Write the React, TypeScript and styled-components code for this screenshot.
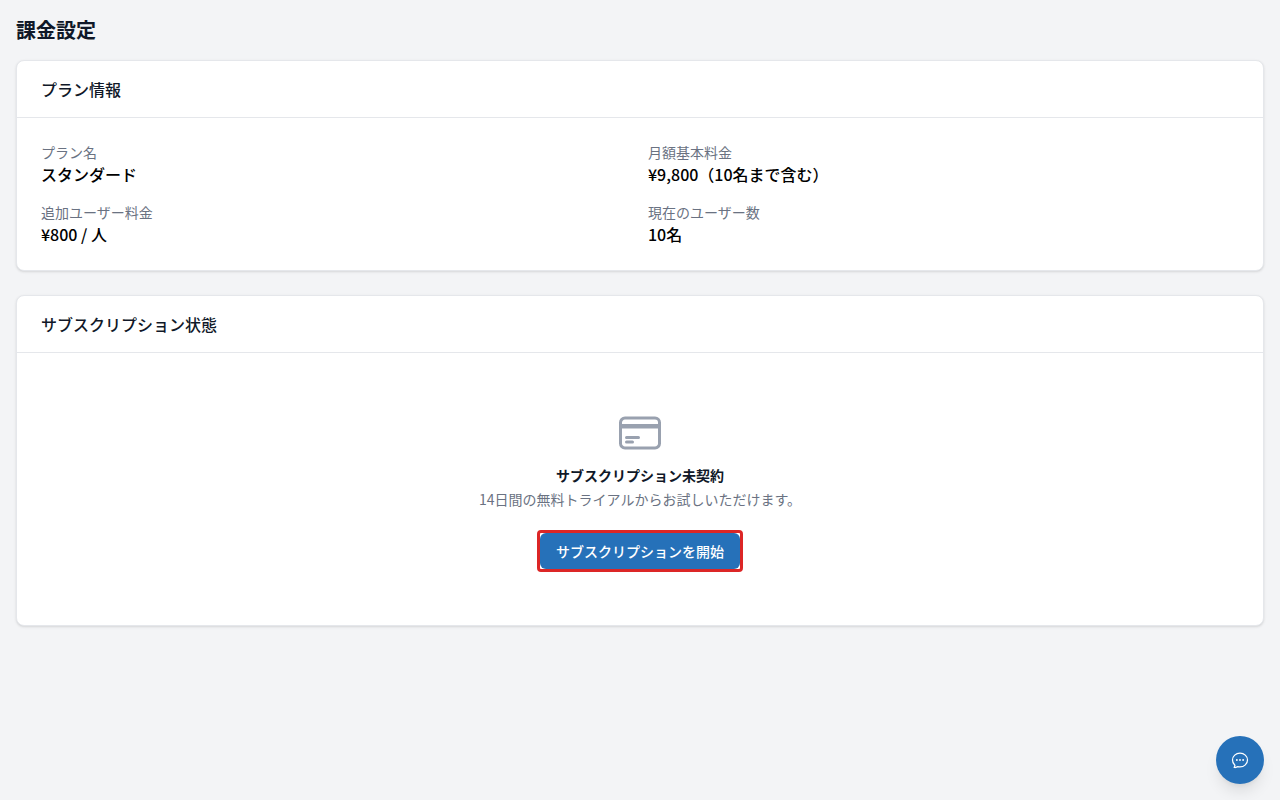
import React from 'react';
import styled, { createGlobalStyle } from 'styled-components';

const GlobalStyle = createGlobalStyle`
  *, *::before, *::after { box-sizing: border-box; }
  body {
    margin: 0;
    background: #f3f4f6;
    color: #000;
    font-family: "Noto Sans CJK JP", sans-serif;
    font-size: 16px;
    line-height: 24px;
  }
  h1, h2, h3, p, dl, dt, dd { margin: 0; }
`;

const Page = styled.main`
  display: flex;
  flex-direction: column;
  min-height: 100vh;
  padding: 16px;
`;

const PageTitle = styled.h1`
  margin-bottom: 16px;
  color: #101828;
  font-size: 20px;
  font-weight: 700;
  line-height: 28px;
`;

const Sections = styled.div`
  display: flex;
  flex-direction: column;
  gap: 24px;
`;

const Card = styled.section`
  background: #fff;
  border: 1px solid #e5e7eb;
  border-radius: 8px;
  box-shadow: 0 1px 3px rgba(0, 0, 0, 0.1), 0 1px 2px -1px rgba(0, 0, 0, 0.1);
`;

const CardHeader = styled.header`
  padding: 16px 24px;
  border-bottom: 1px solid #e5e7eb;
`;

const CardTitle = styled.h2`
  color: #101828;
  font-size: 16px;
  font-weight: 500;
  line-height: 24px;
`;

const CardBody = styled.div`
  padding: 24px;
`;

const PlanGrid = styled.dl`
  display: grid;
  grid-template-columns: repeat(2, minmax(0, 1fr));
  gap: 16px;
`;

const PlanLabel = styled.dt`
  color: #6a7282;
  font-size: 14px;
  line-height: 20px;
`;

const PlanValue = styled.dd`
  font-weight: 500;
`;

const EmptyState = styled.div`
  display: flex;
  flex-direction: column;
  align-items: center;
  padding: 32px 0;
  font-size: 14px;
  line-height: 20px;
  text-align: center;
`;

const CardIcon = styled.svg`
  width: 48px;
  height: 48px;
  color: #99a1af;
`;

const EmptyTitle = styled.h3`
  margin-top: 8px;
  color: #101828;
  font-size: 14px;
  font-weight: 700;
`;

const EmptyText = styled.p`
  margin-top: 4px;
  color: #6a7282;
`;

const PrimaryButton = styled.button`
  position: relative;
  margin-top: 24px;
  padding: 8px 16px;
  border: 0;
  border-radius: 6px;
  background: #2671b9;
  color: #fff;
  font-family: inherit;
  font-size: 14px;
  font-weight: 500;
  line-height: 20px;
  cursor: pointer;

  &::after {
    content: "";
    position: absolute;
    inset: -3px;
    border: 3px solid #dc2626;
    border-radius: 4px;
  }
`;

const ChatButton = styled.button`
  position: fixed;
  right: 16px;
  bottom: 16px;
  display: flex;
  align-items: center;
  justify-content: center;
  width: 48px;
  height: 48px;
  padding: 0;
  border: 0;
  border-radius: 50%;
  background: #2671b9;
  color: #fff;
  box-shadow: 0 10px 15px -3px rgba(0, 0, 0, 0.1), 0 4px 6px -4px rgba(0, 0, 0, 0.1);
  cursor: pointer;
`;

const plan = [
  { label: 'プラン名', value: 'スタンダード' },
  { label: '月額基本料金', value: '¥9,800（10名まで含む）' },
  { label: '追加ユーザー料金', value: '¥800 / 人' },
  { label: '現在のユーザー数', value: '10名' },
];

export default function App() {
  return (
    <>
      <GlobalStyle />
      <Page lang="ja">
        <PageTitle>課金設定</PageTitle>
        <Sections>
          <Card>
            <CardHeader>
              <CardTitle>プラン情報</CardTitle>
            </CardHeader>
            <CardBody>
              <PlanGrid>
                {plan.map((item) => (
                  <div key={item.label}>
                    <PlanLabel>{item.label}</PlanLabel>
                    <PlanValue>{item.value}</PlanValue>
                  </div>
                ))}
              </PlanGrid>
            </CardBody>
          </Card>
          <Card>
            <CardHeader>
              <CardTitle>サブスクリプション状態</CardTitle>
            </CardHeader>
            <CardBody>
              <EmptyState>
                <CardIcon
                  viewBox="0 0 24 24"
                  fill="none"
                  stroke="currentColor"
                  strokeWidth="1.5"
                  strokeLinecap="round"
                  strokeLinejoin="round"
                  aria-hidden="true"
                >
                  <path d="M2.25 8.25h19.5M2.25 9h19.5m-16.5 5.25h6m-6 2.25h3m-3.75 3h15a2.25 2.25 0 0 0 2.25-2.25V6.75A2.25 2.25 0 0 0 19.5 4.5h-15a2.25 2.25 0 0 0-2.25 2.25v10.5A2.25 2.25 0 0 0 4.5 19.5Z" />
                </CardIcon>
                <EmptyTitle>サブスクリプション未契約</EmptyTitle>
                <EmptyText>14日間の無料トライアルからお試しいただけます。</EmptyText>
                <PrimaryButton type="button">サブスクリプションを開始</PrimaryButton>
              </EmptyState>
            </CardBody>
          </Card>
        </Sections>
      </Page>
      <ChatButton type="button" aria-label="チャット">
        <svg
          width="20"
          height="20"
          viewBox="0 0 24 24"
          fill="none"
          stroke="currentColor"
          strokeWidth="1.5"
          strokeLinecap="round"
          strokeLinejoin="round"
          aria-hidden="true"
        >
          <path d="M8.625 12a.375.375 0 1 1-.75 0 .375.375 0 0 1 .75 0Zm0 0H8.25m4.125 0a.375.375 0 1 1-.75 0 .375.375 0 0 1 .75 0Zm0 0H12m4.125 0a.375.375 0 1 1-.75 0 .375.375 0 0 1 .75 0Zm0 0h-.375M21 12c0 4.556-4.03 8.25-9 8.25a9.764 9.764 0 0 1-2.555-.337A5.972 5.972 0 0 1 5.41 20.97a5.969 5.969 0 0 1-.474-.065 4.48 4.48 0 0 0 .978-2.025c.09-.457-.133-.901-.467-1.226C3.93 16.178 3 14.189 3 12c0-4.556 4.03-8.25 9-8.25s9 3.694 9 8.25Z" />
        </svg>
      </ChatButton>
    </>
  );
}
